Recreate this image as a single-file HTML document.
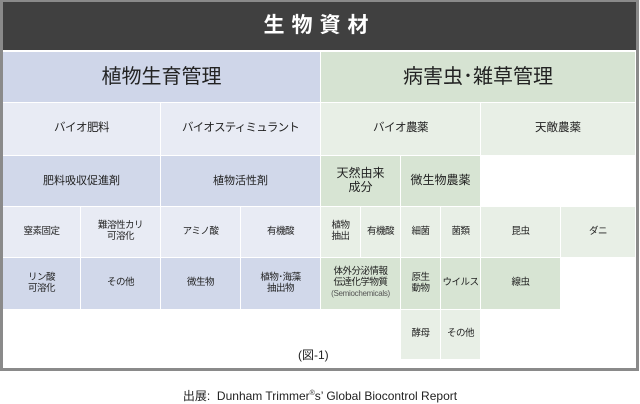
<!DOCTYPE html>
<html><head><meta charset="utf-8"><style>
*{margin:0;padding:0;box-sizing:border-box}
body{width:640px;height:404px;background:#fff;position:relative;font-family:"Liberation Sans","Noto Sans CJK JP",sans-serif;color:#222;overflow:hidden}
.frame{position:absolute;left:0;top:0;width:639px;height:371px;border:3px solid #8a8a8a;border-top-width:2px}
.title{position:absolute;left:3px;top:2px;width:633px;height:48px;background:#404040;color:#fff;font-weight:bold;font-size:21px;letter-spacing:7px;text-align:center;line-height:48px}
.c{position:absolute;display:flex;align-items:center;justify-content:center;text-align:center;font-size:11px;line-height:1.15;border-right:1px solid #fff;border-bottom:1px solid #fff}
.hb{background:#cfd6e9}.lb{background:#e8ebf4}.mb{background:#d1d8ea}
.hg{background:#d6e3d2}.lg{background:#e8efe6}.mg{background:#d7e4d3}
.s{font-size:9.5px;letter-spacing:-0.5px}
</style></head><body>
<div class="frame"></div>
<div class="title">生物資材</div>

<div class="c hb" style="left:3px;top:52px;width:318px;height:51px;font-size:20px">植物生育管理</div>
<div class="c hg" style="left:321px;top:52px;width:315px;height:51px;font-size:20px">病害虫･雑草管理</div>

<div class="c lb" style="left:3px;top:103px;width:158px;height:53px;font-size:11.5px;letter-spacing:-0.5px">バイオ肥料</div>
<div class="c lb" style="left:161px;top:103px;width:160px;height:53px;font-size:11.5px;letter-spacing:-0.8px">バイオスティミュラント</div>
<div class="c lg" style="left:321px;top:103px;width:160px;height:53px;font-size:11.5px;letter-spacing:-0.5px">バイオ農薬</div>
<div class="c lg" style="left:481px;top:103px;width:155px;height:53px;font-size:11.5px">天敵農薬</div>

<div class="c mb" style="left:3px;top:156px;width:158px;height:51px">肥料吸収促進剤</div>
<div class="c mb" style="left:161px;top:156px;width:160px;height:51px">植物活性剤</div>
<div class="c mg" style="left:321px;top:156px;width:80px;height:51px;font-size:12px"><div>天然由来<br>成分</div></div>
<div class="c mg" style="left:401px;top:156px;width:80px;height:51px;font-size:12px">微生物農薬</div>

<div class="c lb s" style="left:3px;top:207px;width:78px;height:51px">窒素固定</div>
<div class="c lb s" style="left:81px;top:207px;width:80px;height:51px"><div>難溶性カリ<br>可溶化</div></div>
<div class="c lb s" style="left:161px;top:207px;width:80px;height:51px">アミノ酸</div>
<div class="c lb s" style="left:241px;top:207px;width:80px;height:51px">有機酸</div>
<div class="c lg s" style="left:321px;top:207px;width:40px;height:51px"><div>植物<br>抽出</div></div>
<div class="c lg s" style="left:361px;top:207px;width:40px;height:51px">有機酸</div>
<div class="c lg s" style="left:401px;top:207px;width:40px;height:51px">細菌</div>
<div class="c lg s" style="left:441px;top:207px;width:40px;height:51px">菌類</div>
<div class="c lg s" style="left:481px;top:207px;width:80px;height:51px">昆虫</div>
<div class="c lg s" style="left:561px;top:207px;width:75px;height:51px">ダニ</div>

<div class="c mb s" style="left:3px;top:258px;width:78px;height:52px"><div>リン酸<br>可溶化</div></div>
<div class="c mb s" style="left:81px;top:258px;width:80px;height:52px">その他</div>
<div class="c mb s" style="left:161px;top:258px;width:80px;height:52px">微生物</div>
<div class="c mb s" style="left:241px;top:258px;width:80px;height:52px"><div>植物･海藻<br>抽出物</div></div>
<div class="c mg s" style="left:321px;top:258px;width:80px;height:52px"><div>体外分泌情報<br>伝達化学物質<br><span style="font-size:8px;color:#555;letter-spacing:-0.3px">(Semiochemicals)</span></div></div>
<div class="c mg s" style="left:401px;top:258px;width:40px;height:52px"><div>原生<br>動物</div></div>
<div class="c mg s" style="left:441px;top:258px;width:40px;height:52px">ウイルス</div>
<div class="c mg s" style="left:481px;top:258px;width:80px;height:52px">線虫</div>

<div class="c lg s" style="left:401px;top:310px;width:40px;height:50px">酵母</div>
<div class="c lg s" style="left:441px;top:310px;width:40px;height:50px">その他</div>

<div style="position:absolute;left:298px;top:346px;font-size:12px">(図-1)</div>
<div style="position:absolute;left:0;width:640px;top:387px;text-align:center;font-size:12px">出展:&nbsp; Dunham Trimmer<sup style="font-size:7px">®</sup>s’ Global Biocontrol Report</div>
</body></html>
